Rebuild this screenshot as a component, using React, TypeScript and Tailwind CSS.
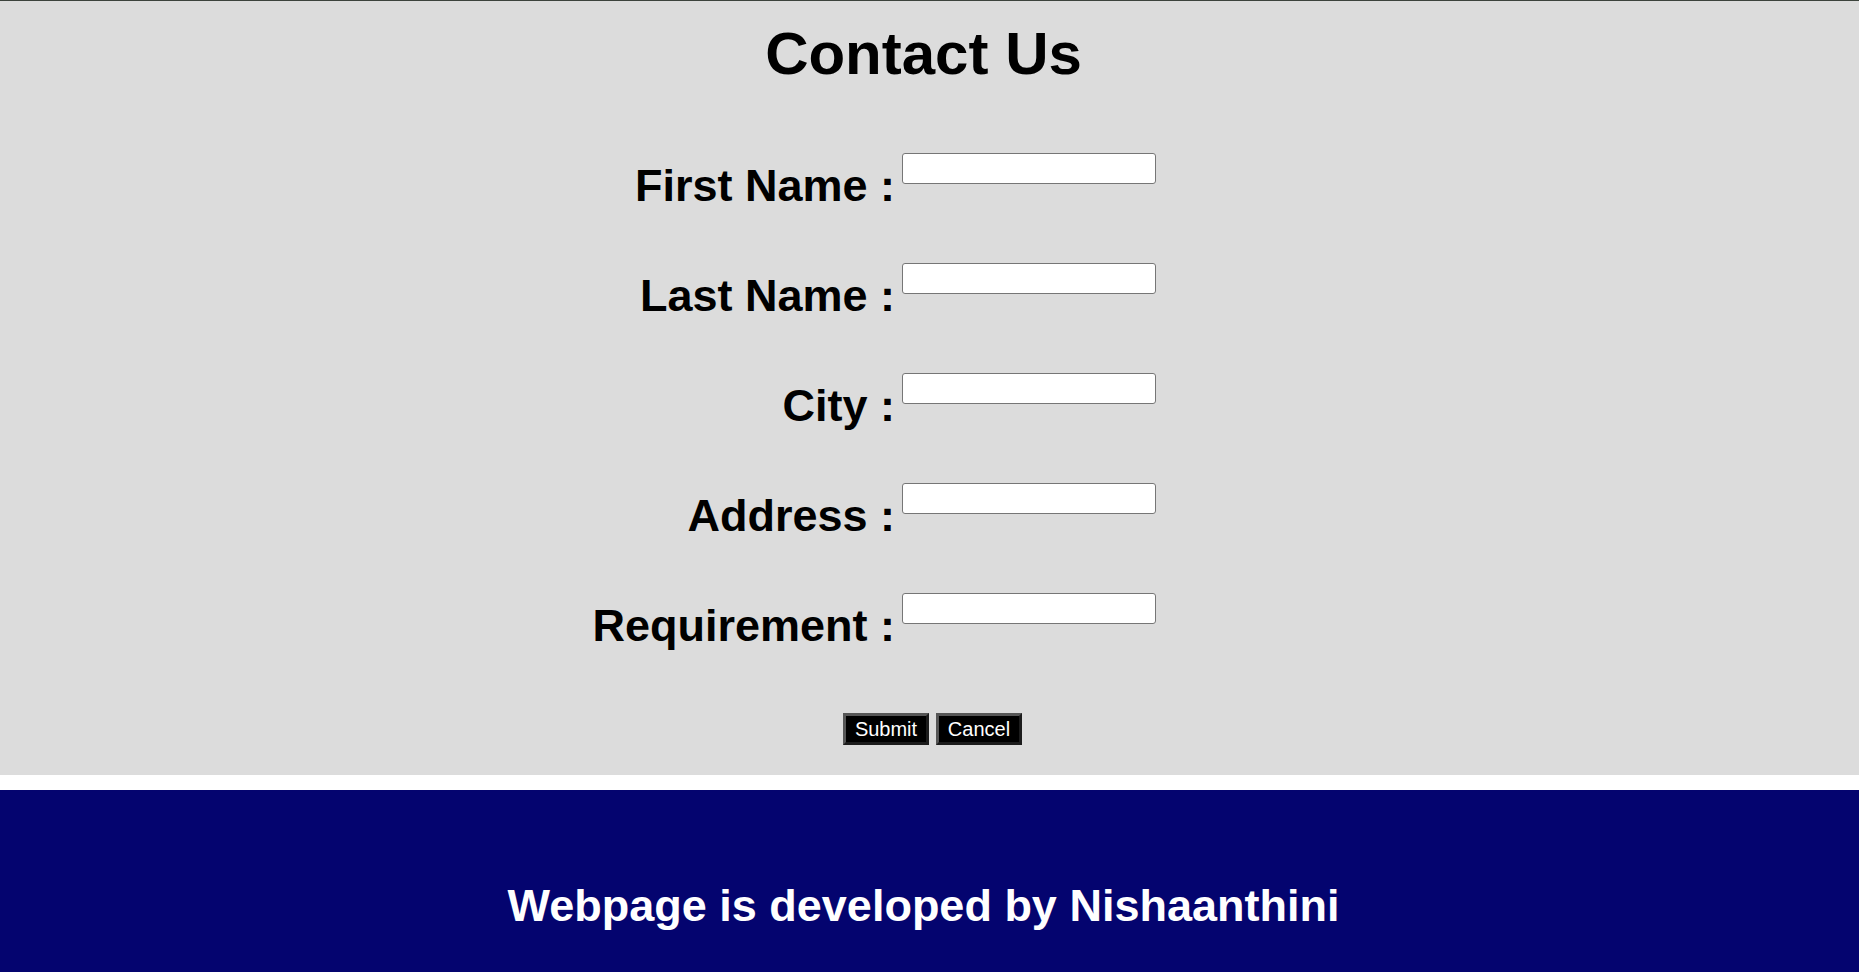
import React from "react";

const fields = ["First Name", "Last Name", "City", "Address", "Requirement"];

function FieldRow({ label }: { label: string }) {
    return (
        <div className="flex h-[110px] items-start">
            <label className="mt-[7px] w-[895px] shrink-0 text-right text-[45px] leading-[52px] font-bold">
                {label} :
            </label>
            <input
                type="text"
                className="ml-[7px] h-[31px] w-[254px] rounded-[3px] border border-[#767676] bg-white"
            />
        </div>
    );
}

export default function App() {
    return (
        <div className="min-h-[972px] w-[1861px] bg-white font-['Liberation_Sans',Arial,sans-serif] text-black">
            <div className="w-[1859px] border-t border-[#3c433c] bg-[#dcdcdc] pt-[18px] pb-[30px]">
                <h1 className="pr-[12px] text-center text-[60px] leading-[69px] font-bold">
                    Contact Us
                </h1>
                <form className="mt-[65px]">
                    {fields.map((f) => (
                        <FieldRow key={f} label={f} />
                    ))}
                    <div className="mt-[10px] flex justify-center gap-[7px] pl-[6px]">
                        <button
                            type="button"
                            className="h-[32px] w-[86px] border-[3px] border-t-[#565656] border-r-[#1c1c1c] border-b-[#1c1c1c] border-l-[#565656] bg-black text-[20px] leading-none text-white"
                        >
                            Submit
                        </button>
                        <button
                            type="button"
                            className="h-[32px] w-[86px] border-[3px] border-t-[#565656] border-r-[#1c1c1c] border-b-[#1c1c1c] border-l-[#565656] bg-black text-[20px] leading-none text-white"
                        >
                            Cancel
                        </button>
                    </div>
                </form>
            </div>
            <footer className="mt-[15px] h-[182px] w-[1859px] bg-[#04046f] pt-[90px]">
                <h3 className="pr-[12px] text-center text-[45px] leading-[52px] font-bold text-white">
                    Webpage is developed by Nishaanthini
                </h3>
            </footer>
        </div>
    );
}
